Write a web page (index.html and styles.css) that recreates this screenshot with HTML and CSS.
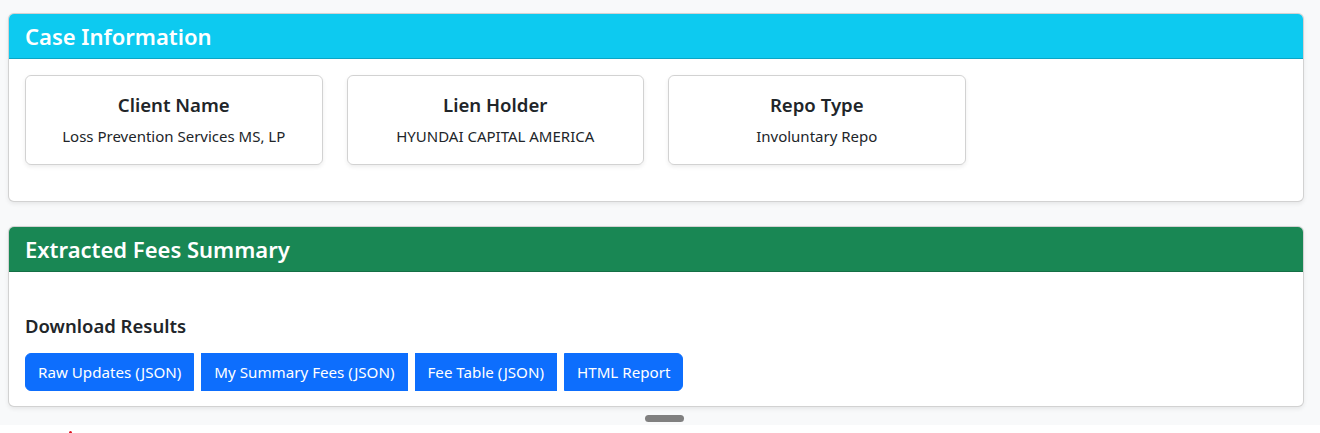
FILE: index.html
```html
<!DOCTYPE html>
<html>
<head>
<meta charset="utf-8">
<link rel="stylesheet" href="styles.css">
</head>
<body>
<div class="app">
  <main class="content">
    <section class="card">
      <div class="card-header header-info"><h4>Case Information</h4></div>
      <div class="card-body">
        <div class="info-row">
          <div class="info-card"><h5>Client Name</h5><p>Loss Prevention Services MS, LP</p></div>
          <div class="info-card"><h5>Lien Holder</h5><p>HYUNDAI CAPITAL AMERICA</p></div>
          <div class="info-card"><h5>Repo Type</h5><p>Involuntary Repo</p></div>
        </div>
      </div>
    </section>
    <section class="card">
      <div class="card-header header-success"><h4>Extracted Fees Summary</h4></div>
      <div class="card-body fees-body">
        <h5 class="dl-title">Download Results</h5>
        <div class="btn-group">
          <button class="btn first">Raw Updates (JSON)</button>
          <button class="btn">My Summary Fees (JSON)</button>
          <button class="btn">Fee Table (JSON)</button>
          <button class="btn last">HTML Report</button>
        </div>
      </div>
    </section>
    <div class="handle-row"><span class="handle"></span></div>
  </main>
  <div class="bottom-pane"><span class="dot"></span></div>
</div>
</body>
</html>
```

FILE: styles.css
```css
* { box-sizing: border-box; }
html, body { margin: 0; padding: 0; }
body {
  font-family: "Segoe UI", "Noto Sans", "Open Sans", sans-serif;
  color: #212529;
  background: #ffffff;
  font-size: 16px;
  line-height: 1.5;
}
.content {
  background: #f8f9fa;
  padding: 13px 16px 0 8px;
}
.card {
  background: #fff;
  border: 1px solid rgba(0,0,0,0.175);
  border-radius: 6px;
  box-shadow: 0 2px 4px rgba(0,0,0,0.075);
  margin-bottom: 24px;
  overflow: hidden;
}
.card-header {
  padding: 8px 16px;
  border-bottom: 1px solid rgba(0,0,0,0.175);
  color: #fff;
}
.card-header h4 {
  margin: 0;
  font-size: 22px;
  font-weight: 600;
  line-height: 28px;
}
.header-info { background: #0dcaf0; }
.header-success { background: #198754; }
.card-body { padding: 16px 16px 20px; }
.info-row {
  display: grid;
  grid-template-columns: repeat(4, 1fr);
  column-gap: 24px;
  margin-bottom: 16px;
}
.info-card {
  border: 1px solid rgba(0,0,0,0.175);
  border-radius: 6px;
  box-shadow: 0 2px 4px rgba(0,0,0,0.075);
  text-align: center;
  padding: 17px 16px 17px;
}
.info-card h5 {
  margin: 0 0 9px;
  font-size: 18.6px;
  font-weight: 600;
  line-height: 24px;
}
.info-card p {
  margin: 0;
  font-size: 15px;
  line-height: 21px;
}
.fees-body { padding: 17px 16px 15px; }
.dl-title {
  margin: 25px 0 15px;
  font-size: 18.5px;
  font-weight: 600;
  line-height: 24px;
}
.btn-group { display: flex; gap: 7px; }
.btn {
  font-family: inherit;
  font-size: 15.15px;
  line-height: 24px;
  padding: 6px 12px;
  border: 1px solid #0d6efd;
  background: #0d6efd;
  color: #fff;
  border-radius: 0;
}
.btn.first { border-radius: 6px 0 0 6px; }
.btn.last { border-radius: 0 6px 6px 0; }
.handle-row {
  display: flex;
  justify-content: center;
  margin-top: -20px;
  height: 14px;
  align-items: center;
  transform: translateX(8px);
}
.handle {
  width: 39px;
  height: 7px;
  border-radius: 4px;
  background: #808080;
}
.bottom-pane {
  height: 20px;
  background: #fff;
  position: relative;
}
.dot {
  position: absolute;
  left: 69px;
  top: 6px;
  width: 3px;
  height: 3px;
  border-radius: 50%;
  background: #e01020;
}
```
